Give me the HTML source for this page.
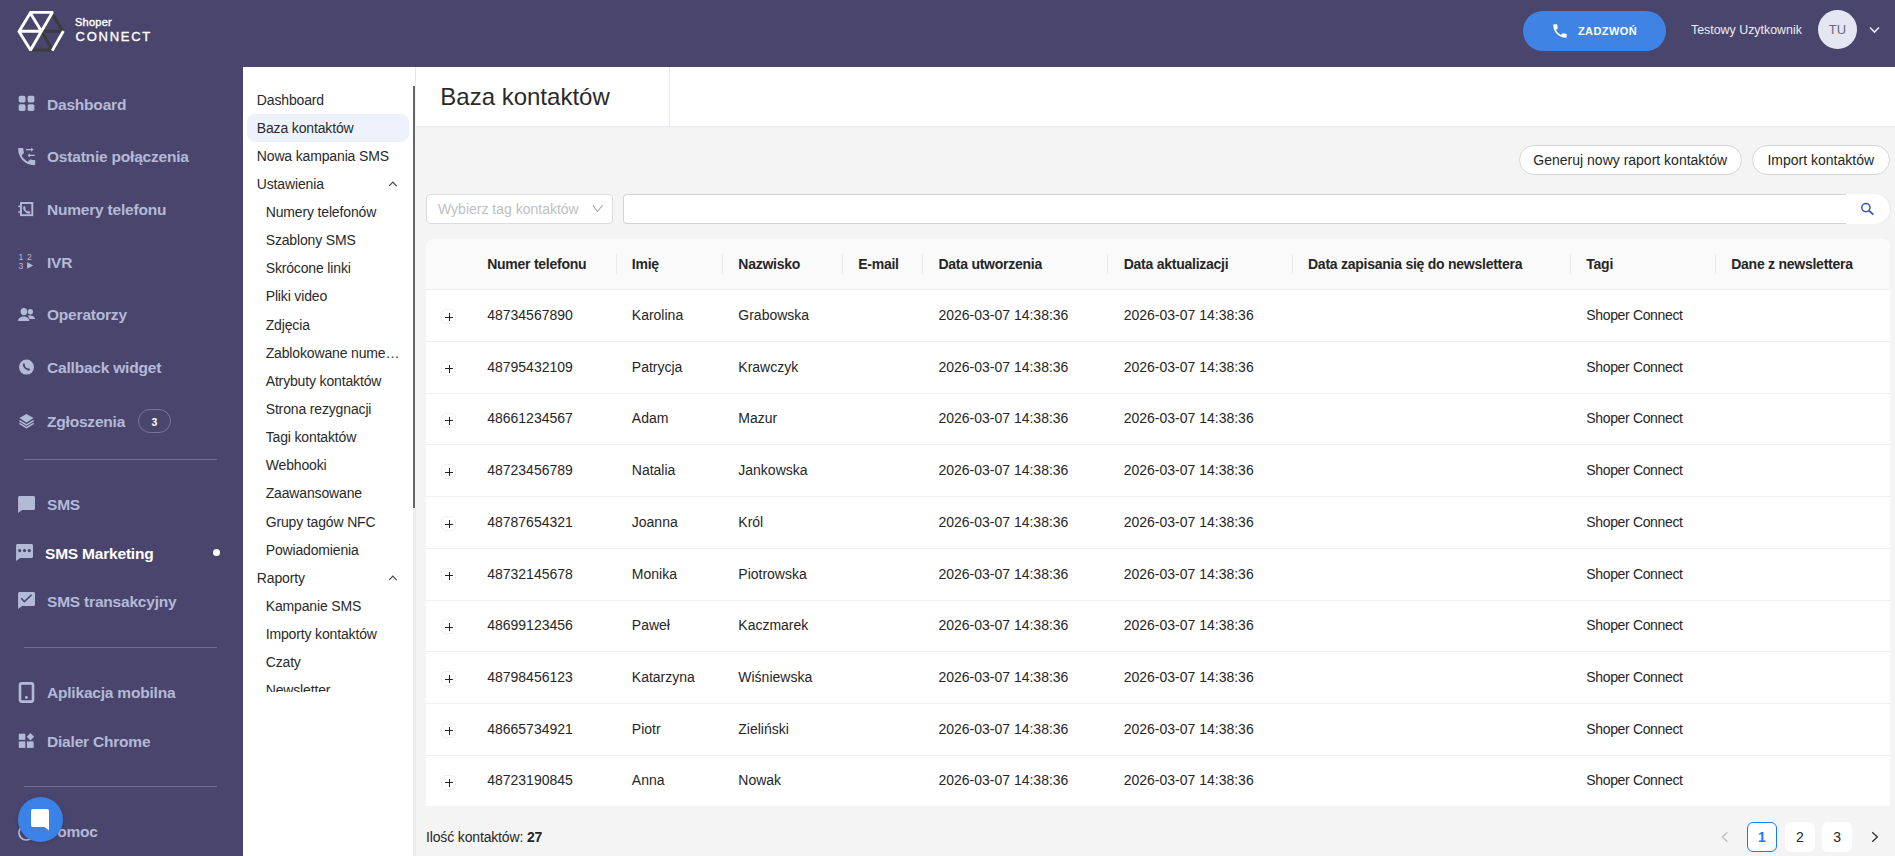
<!DOCTYPE html>
<html><head><meta charset="utf-8"><title>Baza kontaktów</title>
<style>
*{box-sizing:border-box;margin:0;padding:0}
html,body{width:1895px;height:856px;overflow:hidden;background:#f4f4f4;font-family:"Liberation Sans",sans-serif;color:#262626}
.a{position:absolute;white-space:nowrap}
.nav{position:absolute;left:47px;font-size:15.5px;font-weight:bold;color:#b3bad8;line-height:20px;white-space:nowrap;letter-spacing:-0.2px}
.si{position:absolute;font-size:14px;line-height:18px;color:#2a2a2a;white-space:nowrap;letter-spacing:-0.15px}
.th{position:absolute;font-size:14px;font-weight:bold;letter-spacing:-0.25px;line-height:18px;white-space:nowrap;color:#262626}
.td{position:absolute;font-size:14px;line-height:18px;white-space:nowrap;color:#262626}
.sep{position:absolute;top:253.8px;width:1px;height:20.6px;background:#ebebeb}
.hl{position:absolute;left:426px;width:1464px;height:1px;background:#efefef}
.plus{position:absolute;left:441.3px;width:15px;height:15px;border:1px solid #efefef;border-radius:5px;background:#fff}
.plus:before{content:"";position:absolute;left:2.8px;top:6.5px;width:8px;height:1.1px;background:#222}
.plus:after{content:"";position:absolute;left:6.3px;top:3px;width:1.1px;height:8px;background:#222}
.btn{position:absolute;top:145px;height:29.5px;border:1px solid #d6d6d6;border-radius:15px;background:#fff;font-size:14px;line-height:28.5px;color:#262626;white-space:nowrap;text-align:center}
.pg{position:absolute;top:822px;width:30px;height:30px;border-radius:6px;background:#fff;font-size:14px;line-height:30px;text-align:center;color:#262626}
.dv{position:absolute;left:24px;width:193px;height:1px;background:#736e93}
</style></head><body>
<div class="a" style="left:0;top:0;width:1895px;height:67px;background:#4a456d"></div>
<div class="a" style="left:0;top:67px;width:243px;height:789px;background:#4a456d"></div>
<svg class="a" style="left:0;top:0" width="70" height="67" viewBox="0 0 70 67"><g stroke-linecap="butt" fill="none" stroke-width="2.9">
<path d="M51.6 12.6 L62.6 31.2 M41.4 31.3 L61.5 31.3 M41.4 31.3 L52 49.6 M30.6 50 L52.6 50" stroke="#3b3b3b"/>
<path d="M29.6 12.4 L53.3 12.4 M30.6 12.4 L19 31.4 L30.8 50.6 M18.6 31.3 L41.6 31.3 M30 12.4 L41.4 31.3 M52.6 12 L30.3 50.4 M63.4 31 L52.2 50.6" stroke="#fff"/>
</g></svg>
<div class="a" style="left:75px;top:15.5px;font-size:11px;font-weight:normal;-webkit-text-stroke:0.4px #fff;color:#fff;line-height:13px;letter-spacing:0.25px">Shoper</div>
<div class="a" style="left:75.5px;top:28.5px;font-size:13px;font-weight:normal;color:#fff;letter-spacing:1.75px;-webkit-text-stroke:0.35px #fff;line-height:15px">CONNECT</div>
<div class="a" style="left:1523px;top:11px;width:143px;height:40px;border-radius:20px;background:#3f84e5"></div>
<svg class="a" style="left:1551px;top:22px" width="18" height="18" viewBox="0 0 24 24"><path fill="#fff" d="M6.62 10.79c1.44 2.83 3.76 5.14 6.59 6.59l2.2-2.2c.27-.27.67-.36 1.02-.24 1.12.37 2.33.57 3.57.57.55 0 1 .45 1 1V20c0 .55-.45 1-1 1-9.39 0-17-7.61-17-17 0-.55.45-1 1-1h3.5c.55 0 1 .45 1 1 0 1.25.2 2.45.57 3.57.11.35.03.74-.25 1.02l-2.2 2.2z"/></svg>
<div class="a" style="left:1578px;top:25px;font-size:11px;font-weight:bold;color:#fff;letter-spacing:0.4px;line-height:13px">ZADZWOŃ</div>
<div class="a" style="left:1691px;top:23px;font-size:12.4px;color:#ececf2;line-height:15px">Testowy Uzytkownik</div>
<div class="a" style="left:1818px;top:10px;width:39px;height:39px;border-radius:50%;background:#e4e7f2;font-size:13px;line-height:39px;text-align:center;color:#67677a">TU</div>
<svg class="a" style="left:1868px;top:25px" width="13" height="10" viewBox="0 0 13 10"><path d="M2 2.5 L6.5 7 L11 2.5" stroke="#e4e7f2" stroke-width="1.6" fill="none"/></svg>
<div class="nav" style="top:94.6px;left:47px;color:#b3bad8">Dashboard</div>
<div class="nav" style="top:146.8px;left:47px;color:#b3bad8">Ostatnie połączenia</div>
<div class="nav" style="top:199.6px;left:47px;color:#b3bad8">Numery telefonu</div>
<div class="nav" style="top:252.6px;left:47px;color:#b3bad8">IVR</div>
<div class="nav" style="top:304.8px;left:47px;color:#b3bad8">Operatorzy</div>
<div class="nav" style="top:357.6px;left:47px;color:#b3bad8">Callback widget</div>
<div class="nav" style="top:411.8px;left:47px;color:#b3bad8">Zgłoszenia</div>
<div class="nav" style="top:494.5px;left:47px;color:#b3bad8">SMS</div>
<div class="nav" style="top:543.6px;left:45px;color:#ffffff">SMS Marketing</div>
<div class="nav" style="top:591.9px;left:47px;color:#b3bad8">SMS transakcyjny</div>
<div class="nav" style="top:682.6px;left:47px;color:#b3bad8">Aplikacja mobilna</div>
<div class="nav" style="top:731.7px;left:47px;color:#b3bad8">Dialer Chrome</div>
<div class="nav" style="top:822.4px;left:47px;color:#b3bad8">Pomoc</div>
<svg class="a" style="left:0;top:0" width="243" height="856" viewBox="0 0 243 856" fill="#b3bad8"><rect x="18.7" y="95.8" width="6.8" height="6.6" rx="1.6"/><rect x="27.6" y="95.8" width="6.8" height="6.6" rx="1.6"/><rect x="18.7" y="104.2" width="6.8" height="6.7" rx="1.6"/><rect x="27.6" y="104.2" width="6.8" height="6.7" rx="1.6"/><g transform="translate(15.3 145.2) scale(0.95)"><path d="M6.62 10.79c1.44 2.83 3.76 5.14 6.59 6.59l2.2-2.2c.27-.27.67-.36 1.02-.24 1.12.37 2.33.57 3.57.57.55 0 1 .45 1 1V20c0 .55-.45 1-1 1-9.39 0-17-7.61-17-17 0-.55.45-1 1-1h3.5c.55 0 1 .45 1 1 0 1.25.2 2.45.57 3.57.11.35.03.74-.25 1.02l-2.2 2.2z"/></g><path d="M26 149.0 h5.2 v-1.6 l2.3 2.2 -2.3 2.2 v-1.6 h-5.2z"/><path d="M34.8 154.8 h-5 v-1.6 l-2.3 2.2 2.3 2.2 v-1.6 h5z"/><rect x="21" y="203" width="11.3" height="12.2" fill="none" stroke="#b3bad8" stroke-width="1.9"/><rect x="18.3" y="205.6" width="2.4" height="1.6"/><rect x="18.3" y="211.2" width="2.4" height="1.6"/><path d="M23.6 206.5 c0.5 -0.3 1.2 -0.3 1.4 0.3 l0.5 1.2 c0.1 0.4 -0.1 0.7 -0.4 1 c0.6 1.1 1.4 1.9 2.5 2.5 c0.3 -0.3 0.6 -0.5 1 -0.4 l1.2 0.5 c0.6 0.3 0.6 0.9 0.3 1.4 c-0.4 0.6 -1.1 0.9 -1.8 0.7 c-2.4 -0.8 -4.4 -2.8 -5.2 -5.2 c-0.2 -0.7 0.1 -1.4 0.5 -2z"/><text x="18.6" y="260.3" font-family="Liberation Sans" font-size="8.6">1</text><text x="27" y="260.3" font-family="Liberation Sans" font-size="8.6">2</text><text x="18.6" y="268.8" font-family="Liberation Sans" font-size="8.6">3</text><path d="M27.2 262.2 L33.2 265.5 L27.2 268.8z"/><ellipse cx="23.9" cy="311.6" rx="3.3" ry="3.6"/><ellipse cx="30.4" cy="311.7" rx="2.6" ry="2.7"/><path d="M18.1 321 c0 -3 2.8 -4.6 5.6 -4.6 s5.6 1.6 5.6 4.6z"/><path d="M27.6 315.7 c0.6 -0.2 1.4 -0.3 2.2 -0.3 c2.6 0 5.2 1.2 5.2 3.6 h-5.6 c-0.2 -1.3 -0.8 -2.4 -1.8 -3.3z"/><circle cx="26.5" cy="367.1" r="7.5"/><path fill="#4a456d" d="M23.3 363.4 c0.4 -0.3 1 -0.3 1.2 0.2 l0.5 1.1 c0.1 0.4 0 0.7 -0.3 0.9 c0.6 1.3 1.6 2.3 2.9 2.9 c0.2 -0.3 0.5 -0.4 0.9 -0.3 l1.1 0.5 c0.5 0.2 0.5 0.8 0.2 1.2 c-0.4 0.6 -1.1 0.8 -1.8 0.6 c-2.4 -0.8 -4.3 -2.7 -5.1 -5.1 c-0.2 -0.7 0 -1.4 0.4 -2z"/><path d="M26.5 413.9 L33.6 418.1 L26.5 422.4 L19.4 418.1z"/><path d="M19.4 420.6 L26.5 424.9 L33.6 420.6" fill="none" stroke="#b3bad8" stroke-width="1.4"/><path d="M19.4 423.4 L26.5 427.7 L33.6 423.4" fill="none" stroke="#b3bad8" stroke-width="1.4"/><path d="M19.6 496 h13.9 c0.8 0 1.5 0.7 1.5 1.5 v11 c0 0.8 -0.7 1.5 -1.5 1.5 h-11.4 l-4 3 v-15.5 c0 -0.8 0.7 -1.5 1.5 -1.5z"/><path d="M17.6 544 h13.9 c0.8 0 1.5 0.7 1.5 1.5 v11 c0 0.8 -0.7 1.5 -1.5 1.5 h-11.4 l-4 3 v-15.5 c0 -0.8 0.7 -1.5 1.5 -1.5z"/><g fill="#4a456d"><circle cx="19.7" cy="550.6" r="1.6"/><circle cx="24.5" cy="550.6" r="1.6"/><circle cx="29.3" cy="550.6" r="1.6"/></g><path d="M19.6 592 h13.9 c0.8 0 1.5 0.7 1.5 1.5 v11 c0 0.8 -0.7 1.5 -1.5 1.5 h-11.4 l-4 3 v-15.5 c0 -0.8 0.7 -1.5 1.5 -1.5z"/><path d="M21.2 598.3 L24.4 601.6 L31.6 594.7" fill="none" stroke="#4a456d" stroke-width="1.5"/><rect x="20" y="683.4" width="13" height="18.2" rx="1.8" fill="none" stroke="#b3bad8" stroke-width="2.6"/><circle cx="26.4" cy="697.5" r="1.4"/><rect x="18.8" y="733.7" width="6.5" height="6.1"/><rect x="18.8" y="741.4" width="6.5" height="6.5"/><rect x="26.9" y="741.4" width="6.7" height="6.5"/><path d="M30.4 733 L34.1 736.7 L30.4 740.4 L26.7 736.7z"/><circle cx="26.3" cy="832.6" r="7.4" fill="none" stroke="#b3bad8" stroke-width="1.7"/></svg>
<div class="a" style="left:138px;top:409px;width:33px;height:24px;border:1px solid #7a7598;border-radius:12px;font-size:10.5px;font-weight:bold;line-height:24.5px;text-align:center;color:#fff">3</div>
<div class="dv" style="top:459px"></div>
<div class="dv" style="top:647px"></div>
<div class="dv" style="top:786px"></div>
<div class="a" style="left:212.5px;top:549.2px;width:7px;height:7px;border-radius:50%;background:#fff"></div>
<div class="a" style="left:18px;top:796.7px;width:45px;height:45px;border-radius:50%;background:#3b82e8;box-shadow:0 1px 4px rgba(0,0,0,0.15)"></div>
<svg class="a" style="left:30px;top:808px" width="20" height="23" viewBox="0 0 20 23"><path fill="#fff" d="M3 1 h14 c1.2 0 2 0.8 2 2 v19.5 l-4.5 -3.6 h-11.5 c-1.2 0 -2 -0.8 -2 -2 v-13.9 c0 -1.2 0.8 -2 2 -2z"/></svg>
<div class="a" style="left:243px;top:67px;width:172px;height:789px;background:#fff"></div>
<div class="a" style="left:247px;top:114px;width:162px;height:28px;border-radius:8px;background:#edf2fd"></div>
<div class="a" style="left:243px;top:85px;width:170px;height:607px;overflow:hidden">
<div class="si" style="left:13.8px;top:5.55px">Dashboard</div>
<div class="si" style="left:13.8px;top:33.68px">Baza kontaktów</div>
<div class="si" style="left:13.8px;top:61.81px">Nowa kampania SMS</div>
<div class="si" style="left:13.8px;top:89.94px">Ustawienia</div>
<div class="si" style="left:22.7px;top:118.07px">Numery telefonów</div>
<div class="si" style="left:22.7px;top:146.20px">Szablony SMS</div>
<div class="si" style="left:22.7px;top:174.33px">Skrócone linki</div>
<div class="si" style="left:22.7px;top:202.46px">Pliki video</div>
<div class="si" style="left:22.7px;top:230.59px">Zdjęcia</div>
<div class="si" style="left:22.7px;top:258.72px">Zablokowane nume…</div>
<div class="si" style="left:22.7px;top:286.85px">Atrybuty kontaktów</div>
<div class="si" style="left:22.7px;top:314.98px">Strona rezygnacji</div>
<div class="si" style="left:22.7px;top:343.11px">Tagi kontaktów</div>
<div class="si" style="left:22.7px;top:371.24px">Webhooki</div>
<div class="si" style="left:22.7px;top:399.37px">Zaawansowane</div>
<div class="si" style="left:22.7px;top:427.50px">Grupy tagów NFC</div>
<div class="si" style="left:22.7px;top:455.63px">Powiadomienia</div>
<div class="si" style="left:13.8px;top:483.76px">Raporty</div>
<div class="si" style="left:22.7px;top:511.89px">Kampanie SMS</div>
<div class="si" style="left:22.7px;top:540.02px">Importy kontaktów</div>
<div class="si" style="left:22.7px;top:568.15px">Czaty</div>
<div class="si" style="left:22.7px;top:596.28px">Newsletter</div>
</div>
<svg class="a" style="left:380px;top:176.1px" width="24" height="14" viewBox="0 0 24 14"><path d="M9.2 9.9 L12.8 6.1 L16.7 10.1" stroke="#444" stroke-width="1.15" fill="none"/></svg>
<svg class="a" style="left:380px;top:570.2px" width="24" height="14" viewBox="0 0 24 14"><path d="M9.2 9.9 L12.8 6.1 L16.7 10.1" stroke="#444" stroke-width="1.15" fill="none"/></svg>
<div class="a" style="left:415px;top:67px;width:1px;height:19px;background:#e6e6e6"></div>
<div class="a" style="left:413px;top:86px;width:2px;height:422px;background:#666"></div>
<div class="a" style="left:413px;top:508px;width:2.5px;height:348px;background:#ececec"></div>
<div class="a" style="left:415.5px;top:67px;width:1480px;height:60px;background:#fff;border-bottom:1px solid #e4e9f4"></div>
<div class="a" style="left:669px;top:67px;width:1px;height:59px;background:#e4e9f4"></div>
<div class="a" style="left:440.3px;top:82.9px;font-size:24px;line-height:28px;color:#2a2a2a">Baza kontaktów</div>
<div class="btn" style="left:1519px;width:222.5px">Generuj nowy raport kontaktów</div>
<div class="btn" style="left:1752px;width:137.5px">Import kontaktów</div>
<div class="a" style="left:426px;top:194px;width:186.5px;height:29.5px;border:1px solid #dcdcdc;border-radius:4px;background:#fff"></div>
<div class="a" style="left:438px;top:199.6px;font-size:14px;line-height:18px;color:#c0c0c0">Wybierz tag kontaktów</div>
<svg class="a" style="left:591px;top:203px" width="13" height="11" viewBox="0 0 13 11"><path d="M1.9 2.2 L6.4 8.5 L11.8 2.0" stroke="#a0a0a0" stroke-width="1.05" fill="none"/></svg>
<div class="a" style="left:623px;top:194px;width:1266.5px;height:29.8px;border-radius:4px 15px 15px 4px;background:#fff;box-shadow:1px 0 1px rgba(0,0,0,0.06)"></div>
<div class="a" style="left:623px;top:194px;width:1223px;height:29.8px;border:1px solid #d2d2d2;border-right:none;border-radius:4px 0 0 4px"></div>
<svg class="a" style="left:1860px;top:202px" width="15" height="14" viewBox="0 0 15 14"><circle cx="5.9" cy="5.6" r="4.1" stroke="#3355c8" stroke-width="1.5" fill="none"/><path d="M8.9 8.6 L13.4 12.6" stroke="#3355c8" stroke-width="1.9"/></svg>
<div class="a" style="left:426px;top:238.7px;width:1464px;height:567.3px;background:#fff;border-radius:8px 8px 0 0;overflow:hidden"><div style="height:51px;background:#fafafa"></div></div>
<div class="hl" style="top:289px"></div>
<div class="sep" style="left:616.0px"></div>
<div class="sep" style="left:722.0px"></div>
<div class="sep" style="left:842.0px"></div>
<div class="sep" style="left:922.0px"></div>
<div class="sep" style="left:1107.0px"></div>
<div class="sep" style="left:1292.0px"></div>
<div class="sep" style="left:1570.0px"></div>
<div class="sep" style="left:1715.0px"></div>
<div class="th" style="left:487.2px;top:254.75px">Numer telefonu</div>
<div class="th" style="left:631.8px;top:254.75px">Imię</div>
<div class="th" style="left:738.3px;top:254.75px">Nazwisko</div>
<div class="th" style="left:858.2px;top:254.75px">E-mail</div>
<div class="th" style="left:938.4px;top:254.75px">Data utworzenia</div>
<div class="th" style="left:1123.7px;top:254.75px">Data aktualizacji</div>
<div class="th" style="left:1308px;top:254.75px">Data zapisania się do newslettera</div>
<div class="th" style="left:1586.3px;top:254.75px">Tagi</div>
<div class="th" style="left:1731.2px;top:254.75px">Dane z newslettera</div>
<div class="plus" style="top:309.20px"></div>
<div class="td" style="left:487.2px;top:306.05px">48734567890</div>
<div class="td" style="left:631.8px;top:306.05px">Karolina</div>
<div class="td" style="left:738.3px;top:306.05px">Grabowska</div>
<div class="td" style="left:938.4px;top:306.05px">2026-03-07 14:38:36</div>
<div class="td" style="left:1123.7px;top:306.05px">2026-03-07 14:38:36</div>
<div class="td" style="left:1586.3px;top:306.05px;letter-spacing:-0.35px">Shoper Connect</div>
<div class="hl" style="top:341.00px"></div>
<div class="plus" style="top:360.90px"></div>
<div class="td" style="left:487.2px;top:357.75px">48795432109</div>
<div class="td" style="left:631.8px;top:357.75px">Patrycja</div>
<div class="td" style="left:738.3px;top:357.75px">Krawczyk</div>
<div class="td" style="left:938.4px;top:357.75px">2026-03-07 14:38:36</div>
<div class="td" style="left:1123.7px;top:357.75px">2026-03-07 14:38:36</div>
<div class="td" style="left:1586.3px;top:357.75px;letter-spacing:-0.35px">Shoper Connect</div>
<div class="hl" style="top:392.70px"></div>
<div class="plus" style="top:412.60px"></div>
<div class="td" style="left:487.2px;top:409.45px">48661234567</div>
<div class="td" style="left:631.8px;top:409.45px">Adam</div>
<div class="td" style="left:738.3px;top:409.45px">Mazur</div>
<div class="td" style="left:938.4px;top:409.45px">2026-03-07 14:38:36</div>
<div class="td" style="left:1123.7px;top:409.45px">2026-03-07 14:38:36</div>
<div class="td" style="left:1586.3px;top:409.45px;letter-spacing:-0.35px">Shoper Connect</div>
<div class="hl" style="top:444.40px"></div>
<div class="plus" style="top:464.30px"></div>
<div class="td" style="left:487.2px;top:461.15px">48723456789</div>
<div class="td" style="left:631.8px;top:461.15px">Natalia</div>
<div class="td" style="left:738.3px;top:461.15px">Jankowska</div>
<div class="td" style="left:938.4px;top:461.15px">2026-03-07 14:38:36</div>
<div class="td" style="left:1123.7px;top:461.15px">2026-03-07 14:38:36</div>
<div class="td" style="left:1586.3px;top:461.15px;letter-spacing:-0.35px">Shoper Connect</div>
<div class="hl" style="top:496.10px"></div>
<div class="plus" style="top:516.00px"></div>
<div class="td" style="left:487.2px;top:512.85px">48787654321</div>
<div class="td" style="left:631.8px;top:512.85px">Joanna</div>
<div class="td" style="left:738.3px;top:512.85px">Król</div>
<div class="td" style="left:938.4px;top:512.85px">2026-03-07 14:38:36</div>
<div class="td" style="left:1123.7px;top:512.85px">2026-03-07 14:38:36</div>
<div class="td" style="left:1586.3px;top:512.85px;letter-spacing:-0.35px">Shoper Connect</div>
<div class="hl" style="top:547.80px"></div>
<div class="plus" style="top:567.70px"></div>
<div class="td" style="left:487.2px;top:564.55px">48732145678</div>
<div class="td" style="left:631.8px;top:564.55px">Monika</div>
<div class="td" style="left:738.3px;top:564.55px">Piotrowska</div>
<div class="td" style="left:938.4px;top:564.55px">2026-03-07 14:38:36</div>
<div class="td" style="left:1123.7px;top:564.55px">2026-03-07 14:38:36</div>
<div class="td" style="left:1586.3px;top:564.55px;letter-spacing:-0.35px">Shoper Connect</div>
<div class="hl" style="top:599.50px"></div>
<div class="plus" style="top:619.40px"></div>
<div class="td" style="left:487.2px;top:616.25px">48699123456</div>
<div class="td" style="left:631.8px;top:616.25px">Paweł</div>
<div class="td" style="left:738.3px;top:616.25px">Kaczmarek</div>
<div class="td" style="left:938.4px;top:616.25px">2026-03-07 14:38:36</div>
<div class="td" style="left:1123.7px;top:616.25px">2026-03-07 14:38:36</div>
<div class="td" style="left:1586.3px;top:616.25px;letter-spacing:-0.35px">Shoper Connect</div>
<div class="hl" style="top:651.20px"></div>
<div class="plus" style="top:671.10px"></div>
<div class="td" style="left:487.2px;top:667.95px">48798456123</div>
<div class="td" style="left:631.8px;top:667.95px">Katarzyna</div>
<div class="td" style="left:738.3px;top:667.95px">Wiśniewska</div>
<div class="td" style="left:938.4px;top:667.95px">2026-03-07 14:38:36</div>
<div class="td" style="left:1123.7px;top:667.95px">2026-03-07 14:38:36</div>
<div class="td" style="left:1586.3px;top:667.95px;letter-spacing:-0.35px">Shoper Connect</div>
<div class="hl" style="top:702.90px"></div>
<div class="plus" style="top:722.80px"></div>
<div class="td" style="left:487.2px;top:719.65px">48665734921</div>
<div class="td" style="left:631.8px;top:719.65px">Piotr</div>
<div class="td" style="left:738.3px;top:719.65px">Zieliński</div>
<div class="td" style="left:938.4px;top:719.65px">2026-03-07 14:38:36</div>
<div class="td" style="left:1123.7px;top:719.65px">2026-03-07 14:38:36</div>
<div class="td" style="left:1586.3px;top:719.65px;letter-spacing:-0.35px">Shoper Connect</div>
<div class="hl" style="top:754.60px"></div>
<div class="plus" style="top:774.50px"></div>
<div class="td" style="left:487.2px;top:771.35px">48723190845</div>
<div class="td" style="left:631.8px;top:771.35px">Anna</div>
<div class="td" style="left:738.3px;top:771.35px">Nowak</div>
<div class="td" style="left:938.4px;top:771.35px">2026-03-07 14:38:36</div>
<div class="td" style="left:1123.7px;top:771.35px">2026-03-07 14:38:36</div>
<div class="td" style="left:1586.3px;top:771.35px;letter-spacing:-0.35px">Shoper Connect</div>
<div class="td" style="left:426px;top:828.45px;letter-spacing:-0.15px">Ilość kontaktów: <b>27</b></div>
<svg class="a" style="left:1719px;top:830px" width="12" height="14" viewBox="0 0 12 14"><path d="M8.5 2.2 L3.3 7 L8.5 11.8" stroke="#bdbdbd" stroke-width="1.2" fill="none"/></svg>
<div class="pg" style="left:1747px;border:1px solid #1677ff;color:#1677ff;line-height:28px;font-weight:bold">1</div>
<div class="pg" style="left:1785px">2</div>
<div class="pg" style="left:1822.2px">3</div>
<svg class="a" style="left:1869px;top:830px" width="12" height="14" viewBox="0 0 12 14"><path d="M3.2 2.2 L8.4 7 L3.2 11.8" stroke="#262626" stroke-width="1.2" fill="none"/></svg>
</body></html>
